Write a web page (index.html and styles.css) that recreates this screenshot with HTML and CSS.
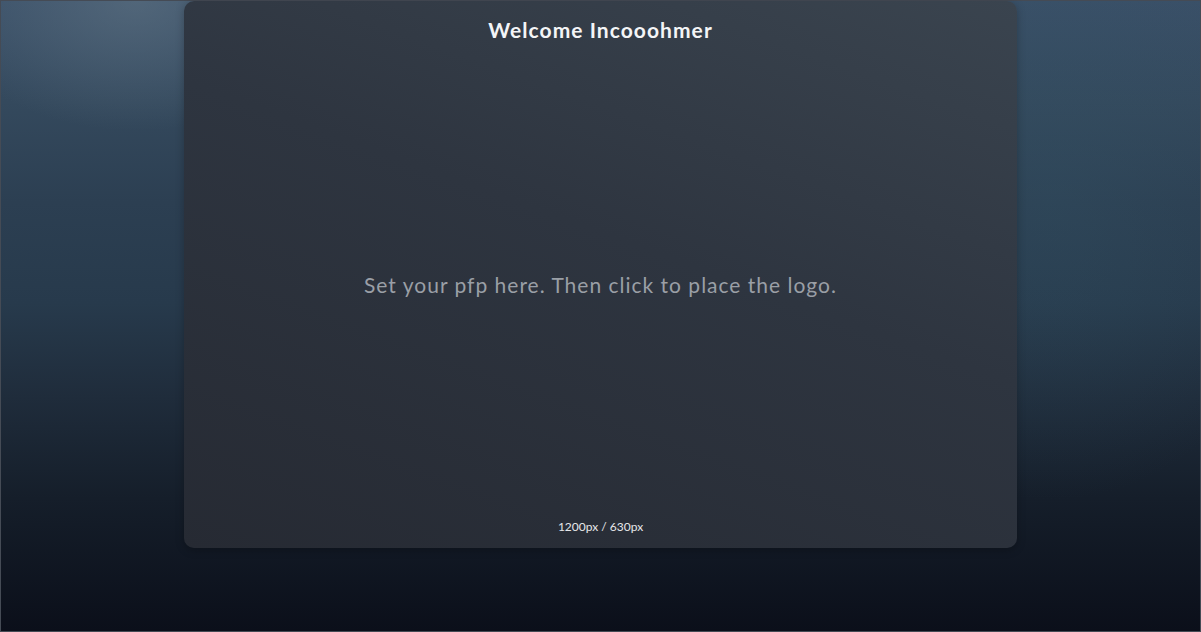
FILE: index.html
```html
<!DOCTYPE html>
<html lang="en">
<head>
<meta charset="utf-8">
<title>Welcome</title>
<link rel="stylesheet" href="styles.css">
</head>
<body>
<div class="app">
  <main class="card">
    <h1 class="title">Welcome Incooohmer</h1>
    <p class="hint">Set your pfp here. Then click to place the logo.</p>
    <div class="size">1200px / 630px</div>
  </main>
</div>
</body>
</html>
```
FILE: styles.css
```css
html, body {
  margin: 0;
  padding: 0;
  height: 100%;
}
body {
  font-family: "Lato", "Noto Sans", sans-serif;
  background: #0b0f18;
}
.app {
  box-sizing: border-box;
  width: 100%;
  height: 100%;
  border: 1px solid #454b55;
  display: flex;
  justify-content: center;
  align-items: flex-start;
  background:
    radial-gradient(ellipse 200px 130px at 135px 0px, rgba(100, 120, 136, 0.55), rgba(100, 120, 136, 0) 100%),
    radial-gradient(ellipse 260px 300px at 1050px 200px, rgba(50, 82, 100, 0.35), rgba(50, 82, 100, 0) 100%),
    linear-gradient(to bottom, #3a5068 0%, #34495d 16%, #2c3f52 32%, #273a4c 48%, #1f2c3b 63%, #151e2a 79%, #0b0f1a 100%);
}
.card {
  width: 833px;
  height: 547px;
  box-sizing: border-box;
  border-radius: 10px;
  background: linear-gradient(200deg, #3a444f 0%, #2e3540 45%, #262a33 100%);
  box-shadow: 0 2px 8px rgba(0, 0, 0, 0.25);
  display: flex;
  flex-direction: column;
  align-items: center;
  padding: 17px 0 14px;
}
.title {
  margin: 0;
  font-size: 21px;
  line-height: 24px;
  font-weight: 700;
  color: #f4f5f7;
  letter-spacing: 1.05px;
}
.hint {
  margin: auto 0;
  padding-top: 8px;
  font-size: 21px;
  line-height: 26px;
  color: #9a9fa6;
  letter-spacing: 1px;
}
.size {
  font-size: 12px;
  line-height: 14px;
  color: #e6e7ea;
}
```
